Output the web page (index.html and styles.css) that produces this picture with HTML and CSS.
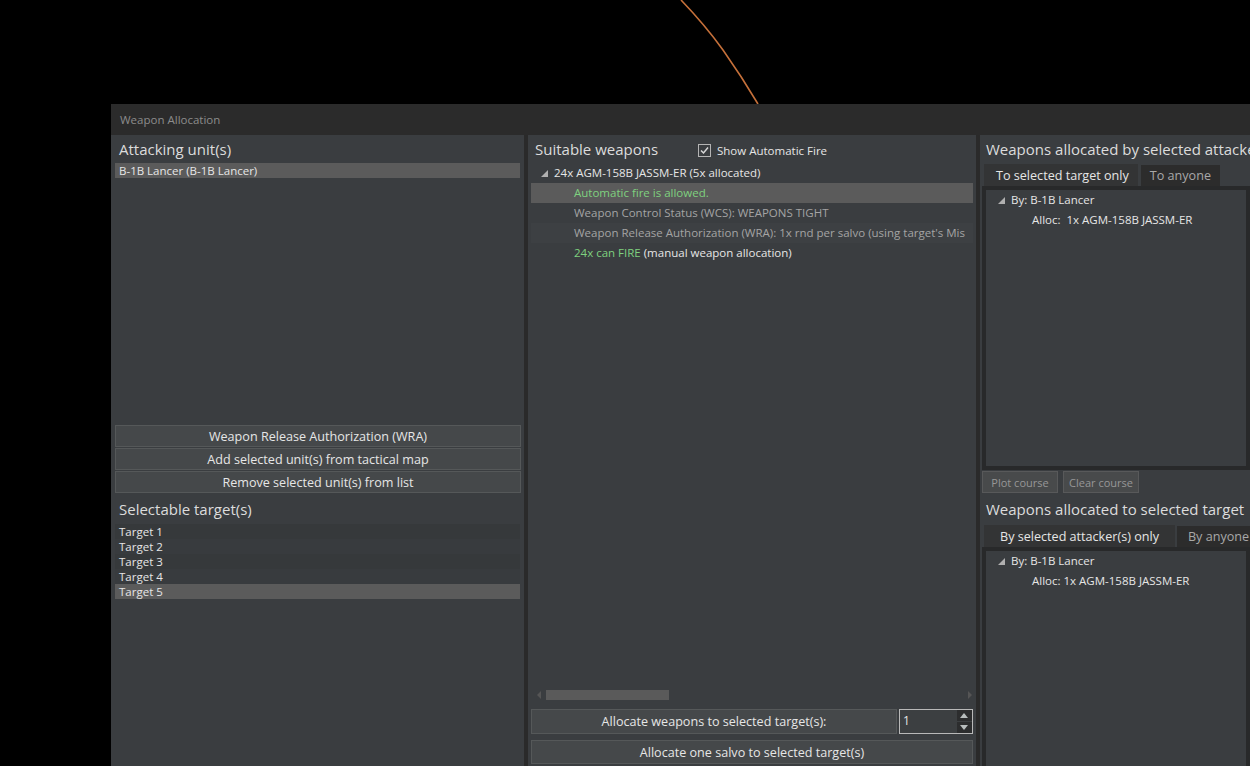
FILE: index.html
```html
<!DOCTYPE html>
<html lang="en">
<head>
  <meta charset="UTF-8" />
  <title>Weapon Allocation</title>
  <link rel="stylesheet" href="styles.css">
</head>
<body>

  <!-- map underneath the dialog -->
  <svg class="map-line" width="1250" height="110" viewBox="0 0 1250 110">
    <path d="M681 0 Q705 25 723 50 Q742 77 758 104" fill="none" stroke="#c5703a" stroke-width="1.6"/>
  </svg>

  <div class="window">
    <div class="titlebar">Weapon Allocation</div>

    <div class="columns">

      <!-- attacking units / targets -->
      <section class="panel">
        <h2 class="panel-title">Attacking unit(s)</h2>
        <ul class="list list-units">
          <li class="selected">B-1B Lancer (B-1B Lancer)</li>
        </ul>
        <div class="btn-stack">
          <button class="btn">Weapon Release Authorization (WRA)</button>
          <button class="btn">Add selected unit(s) from tactical map</button>
          <button class="btn">Remove selected unit(s) from list</button>
        </div>
        <h2 class="panel-title title-gap">Selectable target(s)</h2>
        <ul class="list list-targets">
          <li>Target 1</li>
          <li>Target 2</li>
          <li>Target 3</li>
          <li>Target 4</li>
          <li class="selected">Target 5</li>
        </ul>
      </section>

      <!-- suitable weapons -->
      <section class="panel panel-mid">
        <div class="mid-head">
          <h2 class="panel-title">Suitable weapons</h2>
          <label class="check">
            <svg width="13" height="13" viewBox="0 0 13 13">
              <rect x="0.5" y="0.5" width="12" height="12" fill="#3a3d40" stroke="#b4b4b4"/>
              <path d="M3 6.5 L5.5 9 L10 3.5" fill="none" stroke="#d8d8d8" stroke-width="1.5"/>
            </svg>
            Show Automatic Fire
          </label>
        </div>
        <div class="tree tree-weapons">
          <div class="row">
            <svg class="arrow" width="7" height="7" viewBox="0 0 7 7"><polygon points="7,0 7,7 0,7" fill="#b0b0b0"/></svg>
            24x AGM-158B JASSM-ER (5x allocated)
          </div>
          <div class="row child selected"><span class="ok">Automatic fire is allowed.</span></div>
          <div class="row child dim">Weapon Control Status (WCS): WEAPONS TIGHT</div>
          <div class="row child dim alt">Weapon Release Authorization (WRA): 1x rnd per salvo (using target's Mis</div>
          <div class="row child"><span class="ok">24x can FIRE</span>&nbsp;(manual weapon allocation)</div>
        </div>
        <div class="hscroll">
          <span class="sarrow left"></span>
          <span class="thumb"></span>
          <span class="sarrow right"></span>
        </div>
        <div class="alloc-row">
          <button class="btn btn-tall">Allocate weapons to selected target(s):</button>
          <div class="spin">
            <span class="spin-val">1</span>
            <div class="spin-btns">
              <span class="spin-up"></span>
              <span class="spin-down"></span>
            </div>
          </div>
        </div>
        <button class="btn btn-salvo">Allocate one salvo to selected target(s)</button>
      </section>

      <!-- allocated weapons -->
      <section class="panel panel-right">
        <h2 class="panel-title">Weapons allocated by selected attacke</h2>
        <div class="tabs">
          <span class="tab active">To selected target only</span>
          <span class="tab">To anyone</span>
        </div>
        <div class="frame frame-top">
          <div class="row">
            <svg class="arrow" width="7" height="7" viewBox="0 0 7 7"><polygon points="7,0 7,7 0,7" fill="#b0b0b0"/></svg>
            By: B-1B Lancer
          </div>
          <div class="row sub">Alloc:&nbsp; 1x AGM-158B JASSM-ER</div>
        </div>
        <div class="course-btns">
          <button class="btn-small">Plot course</button>
          <button class="btn-small">Clear course</button>
        </div>
        <h2 class="panel-title title-gap">Weapons allocated to selected target</h2>
        <div class="tabs tabs-wide">
          <span class="tab active">By selected attacker(s) only</span>
          <span class="tab">By anyone</span>
        </div>
        <div class="frame frame-bottom">
          <div class="row">
            <svg class="arrow" width="7" height="7" viewBox="0 0 7 7"><polygon points="7,0 7,7 0,7" fill="#b0b0b0"/></svg>
            By: B-1B Lancer
          </div>
          <div class="row sub">Alloc: 1x AGM-158B JASSM-ER</div>
        </div>
      </section>

    </div>
  </div>

</body>
</html>
```

FILE: styles.css
```css
* { box-sizing: border-box; margin: 0; padding: 0; }

body {
  background: #000;
  width: 1250px;
  height: 766px;
  overflow: hidden;
  position: relative;
  font-family: 'Open Sans', 'Noto Sans', sans-serif;
  font-size: 11.5px;
  color: #e6e6e6;
}

.map-line {
  position: absolute;
  left: 0;
  top: 0;
}

/* dialog window */
.window {
  position: absolute;
  left: 111px;
  top: 104px;
  width: 1139px;
  height: 700px;
  background: #2a2a2a;
  overflow: hidden;
}

.titlebar {
  height: 31px;
  line-height: 31px;
  padding-left: 9px;
  color: #8c8c8c;
  font-size: 11.5px;
  background: #2b2b2b;
}

.columns {
  display: grid;
  grid-template-columns: 413px 448px 1fr;
  column-gap: 4px;
  height: 669px;
}

.panel {
  background: #3a3d40;
  display: flex;
  flex-direction: column;
  padding-top: 5px;
  min-width: 0;
}

.panel-title {
  font-weight: normal;
  font-size: 15px;
  color: #dcdcdc;
  height: 22px;
  line-height: 19px;
  padding-left: 8px;
  white-space: nowrap;
}

.title-gap { margin-top: 7px; }

/* plain lists */
.list {
  list-style: none;
  margin: 1px 4px 0;
}

.list li {
  height: 15px;
  line-height: 15px;
  padding-left: 4px;
  white-space: nowrap;
}

.list li.selected { background: #5b5b5b; }

.list-units { height: 262px; }

.list-targets { margin-top: 2px; }
.list-targets li:nth-child(odd) { background: #36393b; }
.list-targets li:nth-child(even) { background: #383b3e; }
.list-targets li.selected { background: #5b5b5b; }

/* buttons */
.btn {
  display: block;
  width: 100%;
  height: 22px;
  font-family: inherit;
  font-size: 12.6px;
  color: #e6e6e6;
  background: #45484a;
  border: 1px solid #555859;
  cursor: pointer;
}

.btn-stack {
  display: flex;
  flex-direction: column;
  gap: 1px;
  margin: 0 3px 0 4px;
}

.btn-tall { height: 25px; }

.btn-small {
  font-family: inherit;
  font-size: 11px;
  color: #979797;
  background: #484a4b;
  border: 1px solid #58595a;
  height: 22px;
  width: 76px;
}

/* middle column */
.mid-head {
  display: flex;
  align-items: center;
}

.mid-head .panel-title { padding-left: 7px; width: 170px; }

.check {
  display: flex;
  align-items: center;
  gap: 6px;
  color: #e6e6e6;
  margin-top: -1px;
}

.tree-weapons {
  margin: 1px 3px 0;
  height: 525px;
  overflow: hidden;
}

.row {
  height: 20px;
  line-height: 20px;
  white-space: nowrap;
  display: flex;
  align-items: center;
  overflow: hidden;
}

.tree-weapons .row { padding-left: 10px; }
.tree-weapons .row.child { padding-left: 43px; }

.row .arrow { margin-right: 6px; margin-top: 1px; }

.row.selected { background: #5b5b5b; }
.row.alt { background: #3d4043; }
.row.dim { color: #a4a4a4; }
.ok { color: #7fd17f; }

.hscroll {
  position: relative;
  height: 14px;
  margin: 0 3px;
}

.thumb {
  position: absolute;
  left: 15px;
  top: 2px;
  width: 123px;
  height: 10px;
  background: #5a5a5a;
}

.sarrow {
  position: absolute;
  top: 3px;
  width: 0;
  height: 0;
  border-top: 4px solid transparent;
  border-bottom: 4px solid transparent;
}

.sarrow.left { left: 6px; border-right: 4px solid #555; }
.sarrow.right { right: 1px; border-left: 4px solid #555; }

.alloc-row {
  display: flex;
  gap: 2px;
  margin: 7px 3px 0;
}

.alloc-row .btn { flex: 1; }

.spin {
  width: 74px;
  height: 25px;
  border: 1px solid #b9b9b9;
  background: #3c3f41;
  display: flex;
  justify-content: space-between;
}

.spin-val { padding-left: 3px; line-height: 22px; font-size: 12px; }

.spin-btns {
  width: 15px;
  display: flex;
  flex-direction: column;
  gap: 1px;
  background: #3c3f41;
}

.spin-up, .spin-down {
  flex: 1;
  background: #2c2d2e;
  position: relative;
}

.spin-up::after, .spin-down::after {
  content: "";
  position: absolute;
  left: 3px;
  border-left: 4px solid transparent;
  border-right: 4px solid transparent;
}

.spin-up::after { top: 3px; border-bottom: 5px solid #b8bdbd; }
.spin-down::after { top: 3px; border-top: 5px solid #b8bdbd; }

.btn-salvo {
  margin: 6px 3px 0;
  width: auto;
  height: 24px;
}

/* right column */
.panel-right .panel-title { padding-left: 6px; }

.tabs {
  display: flex;
  margin: 2px 0 0 4px;
  height: 22px;
  align-items: flex-end;
}

.tab {
  height: 21px;
  line-height: 21px;
  padding: 0 9px;
  font-size: 12.6px;
  color: #a8a8a8;
  background: #2c2c2c;
  white-space: nowrap;
}

.tab.active {
  height: 22px;
  line-height: 23px;
  color: #e6e6e6;
  background: #333435;
  padding: 0 9px 0 12px;
  margin-right: 3px;
}

.tabs-wide { margin-top: 3px; }
.tabs-wide .tab { padding: 0 11px; }
.tabs-wide .tab.active { padding: 0 16px; margin-right: 2px; }

.frame {
  margin: 0 0 0 2px;
  border: 4px solid #28292a;
  background: #3a3d40;
}

.frame .row { padding-left: 12px; }
.frame .row.sub { padding-left: 46px; }

.frame-top { height: 284px; }
.frame-bottom { flex: 1; }

.course-btns {
  display: flex;
  gap: 5px;
  margin: 1px 0 0 2px;
}
```
